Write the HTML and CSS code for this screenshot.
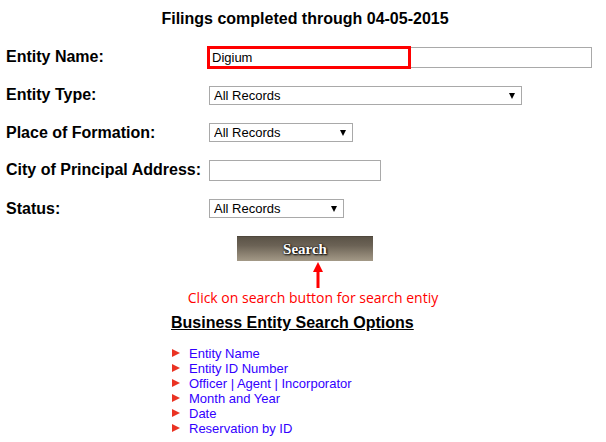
FILE: index.html
```html
<!DOCTYPE html>
<html lang="en">
	<head>
		<meta charset="UTF-8" />
		<meta name="viewport" content="width=device-width, initial-scale=1.0" />
		<title>Business Entity Search</title>

		<link rel="stylesheet" href="styles.css">
	</head>

	<body>
		<div class="page">
			<h1 class="title">Filings completed through 04-05-2015</h1>

			<form class="search-form">
				<label for="entity_name">Entity Name:</label>
				<span class="marked">
					<input type="text" id="entity_name" class="txt txt-wide" value="Digium" />
					<span class="mark-box"></span>
				</span>

				<label for="entity_type">Entity Type:</label>
				<span class="select-wrap">
					<select id="entity_type" class="sel sel-type">
						<option>All Records</option>
					</select>
				</span>

				<label for="place">Place of Formation:</label>
				<span class="select-wrap">
					<select id="place" class="sel sel-place">
						<option>All Records</option>
					</select>
				</span>

				<label for="city">City of Principal Address:</label>
				<input type="text" id="city" class="txt txt-city" />

				<label for="status">Status:</label>
				<span class="select-wrap">
					<select id="status" class="sel sel-status">
						<option>All Records</option>
					</select>
				</span>
			</form>
			<!-- /.search-form -->

			<div class="actions">
				<button type="button" class="btn-search">Search</button>
			</div>

			<div class="hint">
				<svg class="hint-arrow" width="12" height="26" viewBox="0 0 12 26">
					<polygon points="6,0 11,10 1,10" fill="#ff0000" />
					<rect x="4.5" y="8" width="3" height="18" fill="#ff0000" />
				</svg>
				<p class="hint-text">Click on search button for search entiy</p>
			</div>

			<div class="options">
				<h2>Business Entity Search Options</h2>
				<ul>
					<li>Entity Name</li>
					<li>Entity ID Number</li>
					<li>Officer | Agent | Incorporator</li>
					<li>Month and Year</li>
					<li>Date</li>
					<li>Reservation by ID</li>
				</ul>
			</div>
		</div>
	</body>
</html>
```

FILE: styles.css
```css
body {
	margin: 0;
	font-family: "Liberation Sans", Arial, sans-serif;
	color: #000;
	background: #fff;
}

.page {
	padding-left: 4px;
}

.title {
	margin: 10px 0 0;
	font-size: 16px;
	line-height: 18px;
	text-align: center;
}

/* form rows */
.search-form {
	display: grid;
	grid-template-columns: 203px auto;
	grid-template-rows: 38px 38px 37px 38px 39px;
	align-items: center;
	justify-items: start;
	margin-top: 10px;
	padding-left: 2px;
}

.search-form label {
	font-size: 16px;
	font-weight: bold;
}

.txt {
	box-sizing: border-box;
	height: 21px;
	border: 1px solid #a9a9a9;
	padding: 0 3px;
	font-family: "Liberation Sans", Arial, sans-serif;
	font-size: 13px;
	color: #000;
}

.txt-wide {
	width: 384px;
	margin-left: -1px;
}

.txt-city {
	width: 172px;
}

.marked {
	position: relative;
	display: inline-block;
	line-height: 0;
}

.mark-box {
	position: absolute;
	left: -2px;
	top: -1px;
	width: 198px;
	height: 17px;
	border: 3px solid #ff0000;
}

.select-wrap {
	position: relative;
	display: inline-block;
	line-height: 0;
}

.select-wrap::after {
	content: "";
	position: absolute;
	right: 7px;
	top: 7px;
	border-left: 3.5px solid transparent;
	border-right: 3.5px solid transparent;
	border-top: 6px solid #000;
	pointer-events: none;
}

.sel {
	-webkit-appearance: none;
	appearance: none;
	box-sizing: border-box;
	height: 19px;
	border: 1px solid #a9a9a9;
	border-radius: 0;
	background: #fff;
	padding: 0 0 0 4px;
	font-family: "Liberation Sans", Arial, sans-serif;
	font-size: 13px;
	color: #000;
}

.sel-type {
	width: 313px;
}

.sel-place {
	width: 144px;
}

.sel-status {
	width: 135px;
}

/* search button */
.actions {
	margin-top: 8px;
	text-align: center;
	line-height: 0;
}

.btn-search {
	width: 136px;
	height: 25px;
	border: 0;
	border-top: 1px solid #4f473c;
	background: linear-gradient(#5b5347 0%, #6b6255 35%, #8a8070 70%, #a39987 100%);
	font-family: "Liberation Serif", "Times New Roman", serif;
	font-size: 15px;
	font-weight: bold;
	color: #fff;
	text-shadow: 1px 1px 2px #000, 0 0 2px #000;
	padding: 0;
}

/* red annotation */
.hint {
	text-align: center;
	padding-left: 16px;
}

.hint-arrow {
	display: block;
	margin: 1px auto 0;
	position: relative;
	left: 5px;
}

.hint-text {
	margin: 2px 0 0;
	font-family: "Open Sans", sans-serif;
	font-size: 14px;
	line-height: 16px;
	color: #ff0000;
}

/* options list */
.options {
	margin-left: 167px;
	margin-top: 8px;
}

.options h2 {
	margin: 0;
	font-size: 16px;
	line-height: 18px;
	text-decoration: underline;
}

.options ul {
	list-style: none;
	margin: 14px 0 0;
	padding: 0;
}

.options li {
	position: relative;
	padding-left: 18px;
	font-size: 13px;
	line-height: 15px;
	color: #3200ff;
}

.options li::before {
	content: "";
	position: absolute;
	left: 1px;
	top: 3px;
	border-top: 4.5px solid transparent;
	border-bottom: 4.5px solid transparent;
	border-left: 8px solid #ea3323;
}
```
